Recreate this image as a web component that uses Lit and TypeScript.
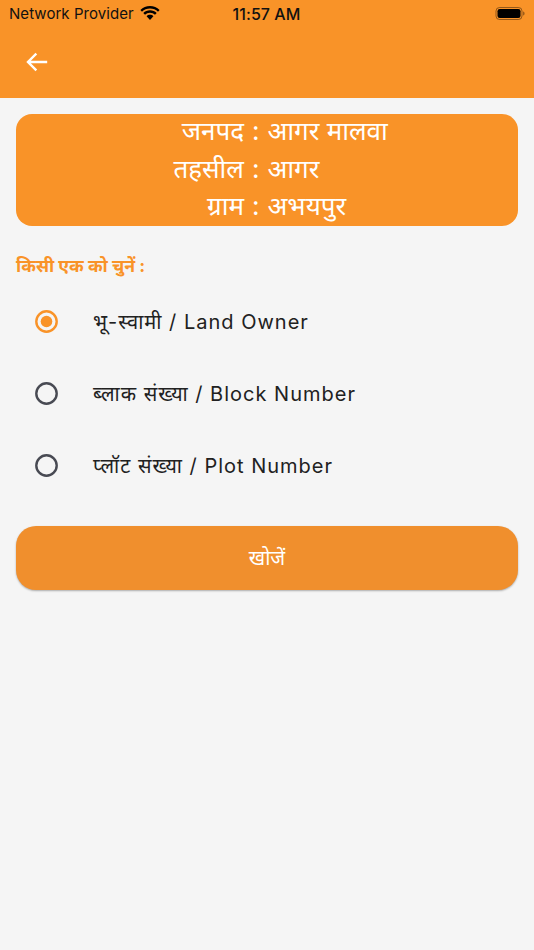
import { LitElement, html, css } from "lit";
import { customElement } from "lit/decorators.js";

const OPTIONS = [
  { label: "भू-स्वामी / Land Owner", checked: true },
  { label: "ब्लाक संख्या / Block Number", checked: false },
  { label: "प्लॉट संख्या / Plot Number", checked: false },
];
const INFO = [
  ["जनपद", "आगर मालवा"],
  ["तहसील", "आगर"],
  ["ग्राम", "अभयपुर"],
];

@customElement("app-root")
export class AppRoot extends LitElement {
  static styles = css`
    :host {
      display: block;
      width: 534px;
      height: 950px;
      background: #f5f5f5;
      font-family: Inter, "Noto Sans", "Noto Sans Devanagari", sans-serif;
      overflow: hidden;
    }
    .top {
      background: #f99328;
      height: 98px;
      display: flex;
      flex-direction: column;
    }
    .status {
      height: 27px;
      display: grid;
      grid-template-columns: 1fr auto 1fr;
      align-items: center;
      padding: 0 9px;
      color: #111;
      font-size: 15px;
      letter-spacing: 0.05px;
    }
    .status-left {
      display: flex;
      align-items: center;
      gap: 6px;
    }
    .time {
      font-weight: 500;
      font-size: 16px;
      margin-left: -1px;
    }
    .status-right {
      display: flex;
      justify-content: flex-end;
    }
    .nav {
      flex: 1;
      display: flex;
      align-items: center;
      padding: 0 0 2px 25px;
    }
    .card {
      box-sizing: border-box;
      margin: 16px 16px 0;
      height: 112px;
      padding-bottom: 4px;
      background: #f99328;
      border-radius: 16px;
      color: #fff;
      font-size: 26px;
      display: grid;
      grid-template-columns: 228px auto 1fr;
      grid-auto-rows: 37.5px;
      align-content: center;
      column-gap: 8px;
      align-items: center;
      line-height: 37px;
    }
    .lab {
      text-align: right;
    }
    .heading {
      margin: 28px 16px 0;
      color: #f99328;
      font-size: 17.7px;
      font-weight: 700;
      line-height: 24px;
    }
    .options {
      display: flex;
      flex-direction: column;
      margin-top: 7px;
    }
    .opt {
      height: 72.3px;
      display: flex;
      align-items: center;
      padding-left: 35px;
      gap: 35px;
      color: #212121;
      font-size: 20px;
      letter-spacing: 1px;
    }
    .radio {
      width: 23px;
      height: 23px;
      flex: none;
    }
    .btn {
      margin: 24px 16px 0;
      height: 64px;
      width: calc(100% - 32px);
      display: flex;
      align-items: center;
      justify-content: center;
      border-radius: 20px;
      background: #f08f2d;
      color: #fff;
      font-size: 20px;
      box-shadow: 0 1px 2px rgba(0, 0, 0, 0.3);
    }
  `;

  render() {
    return html`
      <div class="top">
        <div class="status">
          <div class="status-left">
            <span>Network Provider</span>
            <svg width="20" height="15" viewBox="0 0 20 15">
              <path fill="#000" d="M10 2.500c3.100 0 5.900 1.200 8 3.200l1.600-1.700C17 1.600 13.700 0 10 0S3 1.600.4 4l1.600 1.700c2.100-2 4.900-3.200 8-3.200z" />
              <path fill="#000" d="M10 6.700c1.900 0 3.700.8 5 2l1.700-1.700C15 5.300 12.600 4.300 10 4.300S5 5.300 3.300 7L5 8.700c1.300-1.200 3.100-2 5-2z" />
              <path fill="#000" d="M10 8.800c-1.300 0-2.500.5-3.400 1.400L10 14l3.400-3.800c-.9-.9-2.100-1.400-3.400-1.400z" />
            </svg>
          </div>
          <div class="time">11:57 AM</div>
          <div class="status-right">
            <svg width="30" height="15" viewBox="0 0 30 15">
              <rect x="1" y="1.500" width="26" height="12" rx="3.500" fill="none" stroke="#000" stroke-opacity=".4" />
              <rect x="2.500" y="3" width="23" height="9" rx="2.200" fill="#000" />
              <path d="M28.200 5.500c.9.300 1.300 1.100 1.300 2s-.4 1.700-1.300 2z" fill="#000" fill-opacity=".45" />
            </svg>
          </div>
        </div>
        <div class="nav">
          <svg width="24" height="24" viewBox="0 0 24 24">
            <path fill="none" stroke="#fff" stroke-width="2.400" stroke-linecap="square" d="M21 12H3.500M10.500 4.500 3 12l7.500 7.500" />
          </svg>
        </div>
      </div>
      <div class="card">
        ${INFO.map(
          ([a, b]) => html`<div class="lab">${a}</div><div>:</div><div>${b}</div>`
        )}
      </div>
      <div class="heading">किसी एक को चुनें :</div>
      <div class="options">
        ${OPTIONS.map(
          (o) => html`<div class="opt">
            <svg class="radio" viewBox="0 0 23 23">
              <circle cx="11.500" cy="11.500" r="10.200" fill="none" stroke-width="2.400" stroke=${o.checked ? "#f99328" : "#484a53"} />
              ${o.checked
                ? html`<svg><circle cx="11.500" cy="11.500" r="5.800" fill="#f99328" /></svg>`
                : ""}
            </svg>
            <span>${o.label}</span>
          </div>`
        )}
      </div>
      <div class="btn">खोजें</div>
    `;
  }
}
